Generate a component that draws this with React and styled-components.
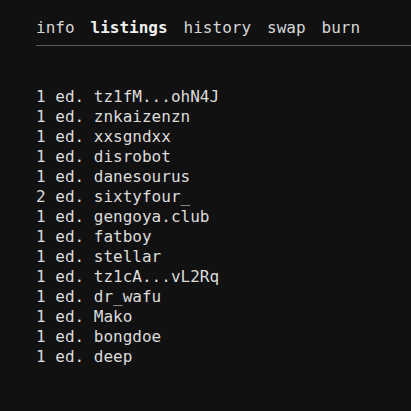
import styled, { createGlobalStyle } from 'styled-components'

const GlobalStyle = createGlobalStyle`
  html, body {
    margin: 0;
    background: #111111;
  }
  body {
    font-family: "DejaVu Sans Mono", "Liberation Mono", monospace;
    color: #dcdcdc;
  }
`

// whole page
const Page = styled.div`
  min-height: 411px;
  padding: 18px 0 0 36px;
  box-sizing: border-box;
`

// tab bar with the grey rule under it
const Tabs = styled.nav`
  display: flex;
  gap: 16px;
  padding-bottom: 7px;
  border-bottom: 1px solid #5a5a5a;
`

const Tab = styled.span`
  font-size: 16px;
  line-height: 20px;
  color: ${(p) => (p.$active ? '#f0f0f0' : '#d6d6d6')};
  font-weight: ${(p) => (p.$active ? 700 : 400)};
`

const List = styled.ul`
  list-style: none;
  margin: 41px 0 0;
  padding: 0;
`

const Row = styled.li`
  font-size: 16px;
  line-height: 20px;
  white-space: pre;
  color: #dcdcdc;
`

const tabs = ['info', 'listings', 'history', 'swap', 'burn']

const listings = [
  [1, 'tz1fM...ohN4J'],
  [1, 'znkaizenzn'],
  [1, 'xxsgndxx'],
  [1, 'disrobot'],
  [1, 'danesourus'],
  [2, 'sixtyfour_'],
  [1, 'gengoya.club'],
  [1, 'fatboy'],
  [1, 'stellar'],
  [1, 'tz1cA...vL2Rq'],
  [1, 'dr_wafu'],
  [1, 'Mako'],
  [1, 'bongdoe'],
  [1, 'deep'],
]

export default function App() {
  return (
    <>
      <GlobalStyle />
      <Page>
        <Tabs>
          {tabs.map((t) => (
            <Tab key={t} $active={t === 'listings'}>{t}</Tab>
          ))}
        </Tabs>
        <List>
          {listings.map(([n, name], i) => (
            <Row key={i}>{n} ed. {name}</Row>
          ))}
        </List>
      </Page>
    </>
  )
}
